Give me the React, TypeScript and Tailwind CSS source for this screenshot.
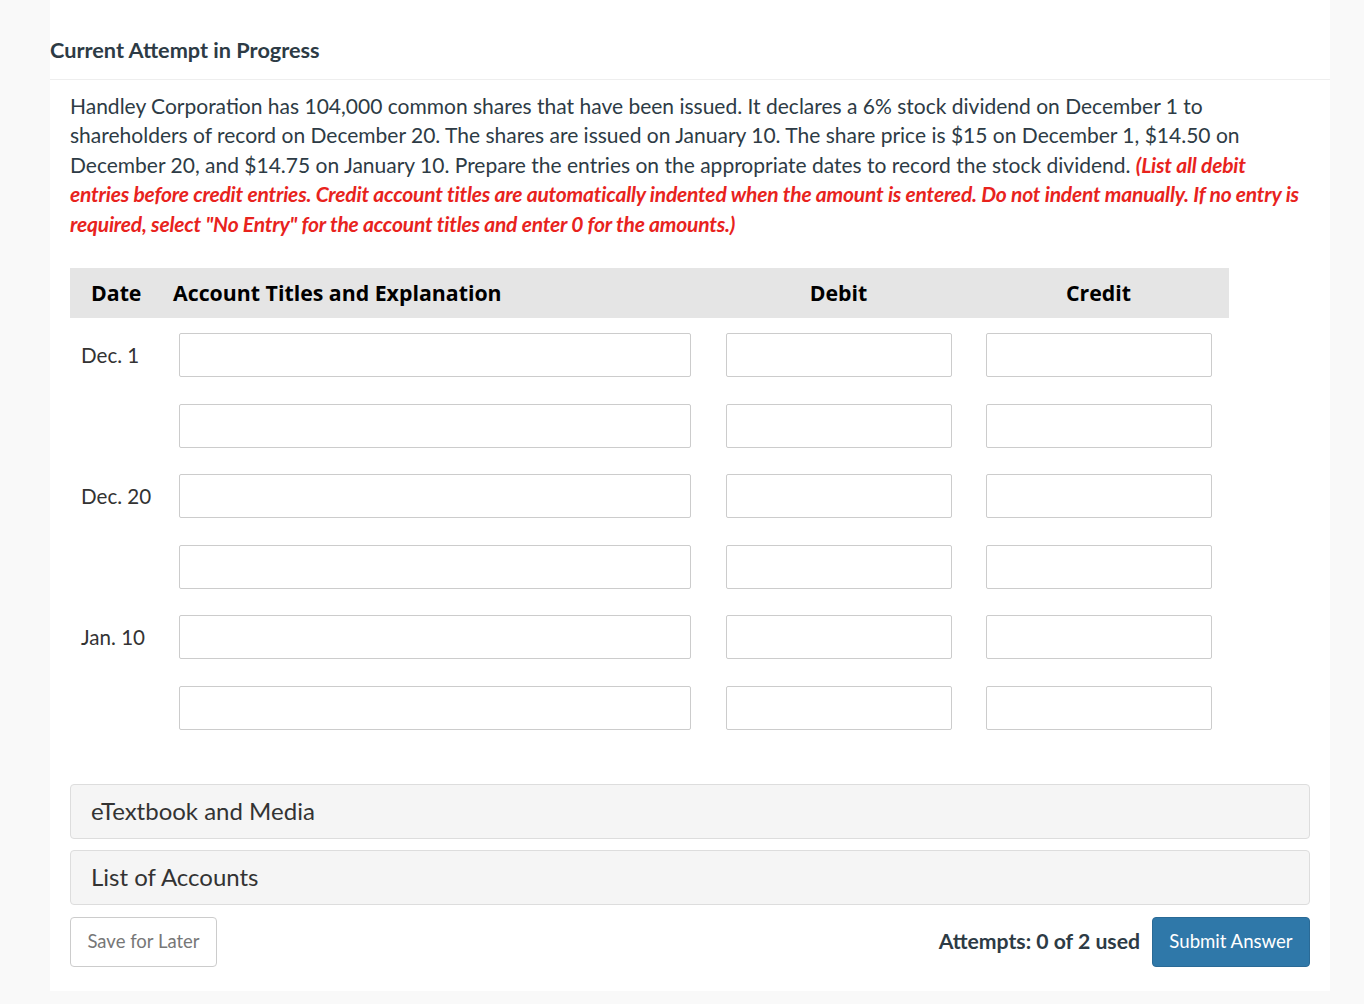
import React from 'react';

const rows = [
  { date: 'Dec. 1' },
  { date: '' },
  { date: 'Dec. 20' },
  { date: '' },
  { date: 'Jan. 10' },
  { date: '' },
];

const lato = { fontFamily: 'Lato, "Open Sans", sans-serif' } as const;

const App: React.FC = () => {
  return (
    <div className="min-h-screen w-full bg-[#f9f9f9]" style={lato}>
      <div className="ml-[50px] w-[1280px] bg-white pb-[24px]">
        {/* Heading */}
        <div className="pt-[36px] pb-[15px] border-b border-[#eeeeee]">
          <h2 className="text-[21.7px] leading-[28px] font-bold text-[#2d3b45]">Current Attempt in Progress</h2>
        </div>

        <div className="px-[20px]">
          {/* Question text */}
          <p className="mt-[11px] text-[21px] leading-[29.4px] text-[#2d3b45] whitespace-nowrap">
            Handley Corporation has 104,000 common shares that have been issued. It declares a 6% stock dividend on December 1 to
            <br />
            shareholders of record on December 20. The shares are issued on January 10. The share price is $15 on December 1, $14.50 on
            <br />
            December 20, and $14.75 on January 10. Prepare the entries on the appropriate dates to record the stock dividend.{' '}
            <span className="italic font-bold text-[#e8231d] tracking-[-0.2px]">
              (List all debit
              <br />
              entries before credit entries. Credit account titles are automatically indented when the amount is entered. Do not indent manually. If no entry is
              <br />
              required, select "No Entry" for the account titles and enter 0 for the amounts.)
            </span>
          </p>

          {/* Journal table */}
          <div className="mt-[30px] w-[1159px]">
            <div
              className="flex h-[50px] items-center bg-[#e5e5e5] text-[21.3px] font-bold text-black"
              style={{ fontFamily: '"Open Sans", "DejaVu Sans", sans-serif' }}
            >
              <div className="w-[103px] pl-[21px]">Date</div>
              <div className="w-[553px]">Account Titles and Explanation</div>
              <div className="w-[225px] text-center">Debit</div>
              <div className="w-[35px]" />
              <div className="w-[225px] text-center">Credit</div>
            </div>

            <div className="mt-[15px] flex flex-col gap-[26.5px]">
              {rows.map((r, i) => (
                <div key={i} className="flex h-[44px] items-center">
                  <div className="w-[109px] pl-[11px] text-[20.6px] text-[#333333]">{r.date}</div>
                  <input
                    className="h-[44px] w-[512px] rounded-[2px] border border-[#cccccc] bg-white outline-none"
                    type="text"
                  />
                  <div className="w-[35px]" />
                  <input
                    className="h-[44px] w-[226px] rounded-[2px] border border-[#cccccc] bg-white outline-none"
                    type="text"
                  />
                  <div className="w-[34px]" />
                  <input
                    className="h-[44px] w-[226px] rounded-[2px] border border-[#cccccc] bg-white outline-none"
                    type="text"
                  />
                </div>
              ))}
            </div>
          </div>

          {/* Accordions */}
          <div className="mt-[54px] flex flex-col gap-[11px]">
            <div className="flex h-[55px] items-center rounded-[4px] border border-[#dddddd] bg-[#f5f5f5] pl-[20px] text-[24px] text-[#333333]">
              eTextbook and Media
            </div>
            <div className="flex h-[55px] items-center rounded-[4px] border border-[#dddddd] bg-[#f5f5f5] pl-[20px] text-[24px] text-[#333333]">
              List of Accounts
            </div>
          </div>

          {/* Footer actions */}
          <div className="mt-[12px] flex items-center">
            <button className="h-[50px] w-[147px] rounded-[4px] border border-[#cccccc] bg-white text-[18.5px] text-[#777777]">
              Save for Later
            </button>
            <div className="flex-1" />
            <span className="mr-[12px] text-[21.2px] font-bold text-[#2d3b45]">Attempts: 0 of 2 used</span>
            <button className="h-[50px] w-[158px] rounded-[4px] border border-[#2a6a96] bg-[#2f78a9] text-[18.6px] text-white">
              Submit Answer
            </button>
          </div>
        </div>
      </div>
    </div>
  );
};

export default App;
